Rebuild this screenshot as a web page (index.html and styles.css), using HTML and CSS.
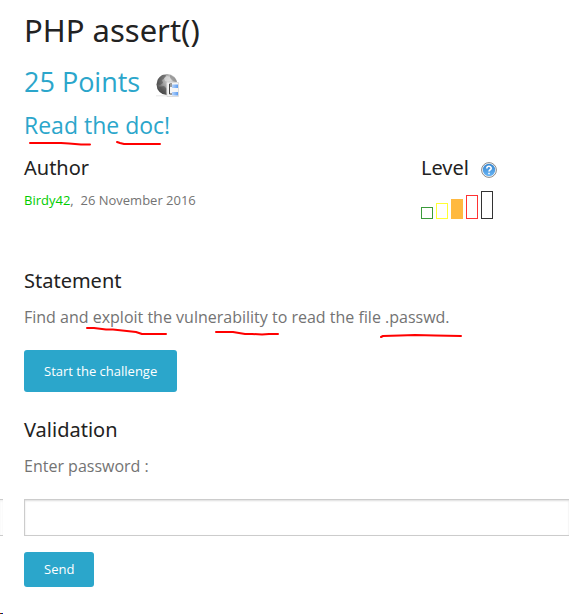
FILE: index.html
```html
<!DOCTYPE html>
<html lang="en">
<head>
<meta charset="utf-8">
<title>PHP assert()</title>
<link rel="stylesheet" href="styles.css">
</head>
<body>
<main class="page">
  <h1 class="title">PHP assert()</h1>
  <h2 class="points">25 Points
    <svg class="globe" viewBox="0 0 24 24" aria-hidden="true">
      <defs>
        <radialGradient id="globe-fill" cx=".65" cy=".3" r=".8"><stop offset="0" stop-color="#ddd"/><stop offset=".5" stop-color="#999"/><stop offset="1" stop-color="#333"/></radialGradient>
        <linearGradient id="node-fill" x2="1"><stop offset="0" stop-color="#b9d5fb"/><stop offset="1" stop-color="#5d9df0"/></linearGradient>
      </defs>
      <path d="M1 22h12v1.500H1z" fill="#eee"/>
      <circle cx="12" cy="11.500" r="10.500" fill="url(#globe-fill)"/>
      <path d="M3 6l4-4 4 0-1 3-3 2 1 3-3 2-3-1zM4 14l5-1 3 3-2 4-3-1z" fill="#444" opacity=".5"/>
      <path d="M15 2l5 3 2 4-4-1-3-3z" fill="#777" opacity=".5"/>
      <path d="M9 5l3-2 3 1 1 3-3 2-3-1z" fill="#ddd" opacity=".7"/>
      <path d="M12 9.500h11.500v14H12z" fill="#f6f6f6" stroke="#ddd"/>
      <path d="M17 11h-2.500v10H17M14.500 13h3" fill="none" stroke="#444"/>
      <path d="M17 11.500h6v3.500h-6zM17 19h6v3.500h-6z" fill="url(#node-fill)"/>
    </svg>
  </h2>
  <h3 class="hint"><span class="mark">Read<svg class="stroke stroke-read" viewBox="0 0 62 4"><path d="M1 1H32L40 1.500L52 2.500H61"/></svg></span> the <span class="mark">doc!<svg class="stroke stroke-doc" viewBox="0 0 45 4"><path d="M1 1L4 2L8 3H44"/></svg></span></h3>

  <div class="meta">
    <section>
      <h4 class="heading">Author</h4>
      <p class="byline"><a class="author" href="#">Birdy42</a>,&nbsp; 26 November 2016</p>
    </section>
    <section>
      <h4 class="heading level-heading">Level
        <svg class="help" viewBox="0 0 16 16" role="img" aria-label="Help">
          <defs><linearGradient id="help-fill" x2="0" y2="1"><stop offset="0" stop-color="#3585cf"/><stop offset="1" stop-color="#69b5f5"/></linearGradient></defs>
          <circle cx="8" cy="8" r="7.400" fill="#fff" stroke="#888"/>
          <circle cx="8" cy="8" r="6.200" fill="url(#help-fill)"/>
          <path d="M5.800 6.500C5.800 3.600 10.200 3.700 10.200 6.200C10.200 7.800 8 7.700 8 9.500M8 10.700v1.600" fill="none" stroke="#fff" stroke-width="1.600"/>
        </svg>
      </h4>
      <div class="bars" role="img" aria-label="Medium">
        <span class="bar bar-1"></span><span class="bar bar-2"></span><span class="bar bar-3"></span><span class="bar bar-4"></span><span class="bar bar-5"></span>
      </div>
    </section>
  </div>

  <section class="statement">
    <h4 class="heading">Statement</h4>
    <p class="text">Find and <span class="mark">exploit the<svg class="stroke stroke-exploit" viewBox="0 0 81 8"><path d="M1 1H8L20 2.500H27L50 5L56 7H80"/></svg></span> vulne<span class="mark">rability to<svg class="stroke stroke-ability" viewBox="0 0 64 5"><path d="M1 1H18L30 3H37L47 3.500L54 3H63"/></svg></span> read the file <span class="mark">.passwd.<svg class="stroke stroke-passwd" viewBox="0 0 82 4"><path d="M1 3L3 2L20 1.500L35 1L55 1.500L81 2"/></svg></span></p>
    <a class="button start" href="#">Start the challenge</a>
  </section>

  <form class="validation">
    <h4 class="heading">Validation</h4>
    <label class="text" for="password">Enter password :</label>
    <div class="field-row">
      <span class="side-field"></span>
      <input class="field" id="password" type="text">
    </div>
    <button class="button send" type="button">Send</button>
  </form>
</main>
<span class="side-text"></span>
</body>
</html>
```
FILE: styles.css
```css
* { box-sizing: border-box; }
body {
  margin: 0;
  min-height: 100vh;
  position: relative;
  overflow: hidden;
  background: #fff;
  color: #737373;
  font-family: "Open Sans", sans-serif;
}
h1, h2, h3, h4, p { margin: 0; font-weight: 400; }
.page { padding: 8px 0 24px 24px; }
.title {
  color: #222;
  font: 400 31px/44px "Noto Sans", sans-serif;
}
.points, .hint { color: #2ba6cb; }
.points {
  display: flex;
  align-items: center;
  gap: 15px;
  margin-top: 8px;
  font-size: 27px;
  line-height: 44px;
}
.globe { width: 24px; height: 24px; margin-top: 5px; }
.hint { font-size: 23px; line-height: 42px; }
.mark { position: relative; display: inline-block; }
.stroke {
  position: absolute;
  overflow: visible;
  fill: none;
  stroke: #f00;
  stroke-width: 2;
  stroke-linecap: round;
  stroke-linejoin: round;
}
.stroke-read { width: 62px; left: 5px; bottom: 0; }
.stroke-doc { width: 45px; right: 9px; bottom: 1px; }
.stroke-exploit { width: 81px; left: -7px; bottom: -6px; }
.stroke-ability { width: 64px; right: 8px; bottom: -7px; }
.stroke-passwd { width: 82px; right: -12px; bottom: -9px; }
.heading {
  color: #222;
  font: 400 20px/32px "Noto Sans", sans-serif;
}
.meta {
  display: grid;
  grid-template-columns: 397px 1fr;
  margin-top: 6px;
}
.byline { margin-top: 6px; font-size: 13px; line-height: 20px; }
.author { color: #0c0; text-decoration: none; }
.level-heading { display: flex; align-items: center; gap: 12px; }
.help { width: 16px; height: 16px; margin-top: 3px; }
.bars {
  display: flex;
  align-items: flex-end;
  gap: 3px;
  height: 28px;
  margin-top: 7px;
}
.bar { width: 12px; border: 1px solid; }
.bar-1 { height: 12px; color: #3a9b3a; }
.bar-2 { height: 16px; color: #ff3; }
.bar-3 { height: 20px; color: #ffb940; background: #ffb940; }
.bar-4 { height: 24px; color: #f33; }
.bar-5 { height: 28px; color: #333; }
.statement { margin-top: 46px; }
.text { display: block; margin-top: 8px; font-size: 16px; line-height: 24px; }
.button {
  display: inline-block;
  border: 0;
  border-radius: 3px;
  background: #2ba6cb;
  color: #fff;
  padding: 0 20px;
  font: 400 13px "Open Sans", sans-serif;
  text-decoration: none;
}
.start { margin-top: 21px; line-height: 42px; vertical-align: top; }
.validation { margin-top: 22px; }
.field-row { display: flex; gap: 21px; margin: 21px 0 16px -24px; }
.side-field {
  width: 3px;
  height: 37px;
  border: solid #ccc;
  border-width: 1px 0;
  box-shadow: inset 0 1px 2px #eee;
}
.field {
  flex: 1;
  min-width: 0;
  height: 37px;
  padding: 8px;
  border: 1px solid #ccc;
  border-right: 0;
  border-radius: 0;
  background: #fff;
  box-shadow: inset 0 1px 2px #ddd;
  font: 400 14px "Open Sans", sans-serif;
}
.send { line-height: 35px; vertical-align: top; }
.side-text {
  position: absolute;
  left: 0;
  bottom: 0;
  width: 3px;
  height: 1px;
  background: linear-gradient(90deg, #b00 33%, #060 33% 66%, #00c 66%);
}
```
